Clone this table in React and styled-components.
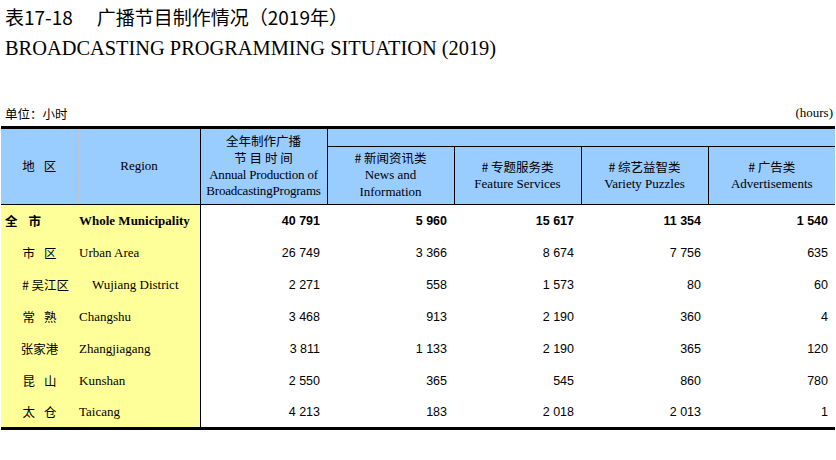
import React from 'react';
import styled, { createGlobalStyle } from 'styled-components';

const GlobalStyle = createGlobalStyle`
  body {
    margin: 0;
    background: #fff;
    color: #000;
  }
`;

const CN = '"Noto Sans CJK SC", "Liberation Sans", sans-serif';
const SERIF = '"Liberation Serif", "Noto Sans CJK SC", serif';
const NUM = '"Liberation Sans", Arial, sans-serif';

const Page = styled.div`
  width: 836px;
  height: 460px;
  padding-top: 5px;
  box-sizing: border-box;
`;

const TitleCn = styled.div`
  display: flex;
  gap: 24px;
  font-family: ${CN};
  font-size: 19px;
  line-height: 24px;
  padding-left: 5px;
  white-space: pre;
`;

const TitleEn = styled.div`
  font-family: ${SERIF};
  font-size: 20.4px;
  line-height: 26px;
  margin-top: 6px;
  padding-left: 5px;
`;

const UnitRow = styled.div`
  display: flex;
  justify-content: space-between;
  align-items: center;
  margin-top: 43px;
  padding: 0 3px 0 5px;
  height: 18px;
`;

const UnitCn = styled.span`
  font-family: ${CN};
  font-size: 12.5px;
`;

const UnitEn = styled.span`
  font-family: ${SERIF};
  font-size: 13px;
`;

const Table = styled.table`
  margin: 4px 0 0 1px;
  width: 834px;
  table-layout: fixed;
  border-collapse: collapse;
  border-top: 3px solid #000;
  border-bottom: 3px solid #000;
`;

const HeadCell = styled.th`
  background: #99ccff;
  font-weight: normal;
  padding: 0;
  text-align: center;
  vertical-align: middle;
  line-height: 16.7px;
  height: ${(p) => p.h || 'auto'};
  border-bottom: 1px solid #000;
  border-right: 1px solid ${(p) => (p.soft ? '#b8c4d0' : '#000')};
  &:last-child {
    border-right: none;
  }
`;

const Cn = styled.div`
  font-family: ${CN};
  font-size: 12.5px;
`;

const En = styled.div`
  font-family: ${SERIF};
  font-size: 13px;
  letter-spacing: ${(p) => p.tight || 0};
`;

const Spread = styled.span`
  display: inline-flex;
  gap: ${(p) => p.gap}px;
  font-family: ${CN};
  font-size: 12.5px;
  font-weight: ${(p) => (p.bold ? 'bold' : 'normal')};
`;

const Row = styled.tr`
  height: 32px;
`;

const NameCell = styled.td`
  background: #ffff99;
  padding: 0 0 0 ${(p) => p.pad || 0}px;
  text-align: ${(p) => p.align || 'center'};
  font-family: ${CN};
  font-size: 12.5px;
  white-space: nowrap;
`;

const RegionCell = styled.td`
  background: #ffff99;
  padding: 0 0 0 ${(p) => p.pad || 1}px;
  font-family: ${SERIF};
  font-size: 13px;
  font-weight: ${(p) => (p.bold ? 'bold' : 'normal')};
  border-right: 1px solid #000;
  white-space: nowrap;
`;

const NumCell = styled.td`
  padding: 0 7px 0 0;
  text-align: right;
  font-family: ${NUM};
  font-size: 12.5px;
  font-weight: ${(p) => (p.bold ? 'bold' : 'normal')};
`;

const rows = [
  { cn: ['全', '市'], gap: 11, left: true, en: 'Whole Municipality', bold: true, nums: ['40 791', '5 960', '15 617', '11 354', '1 540'] },
  { cn: ['市', '区'], gap: 9, en: 'Urban Area', nums: ['26 749', '3 366', '8 674', '7 756', '635'] },
  { cn: ['# 吴江区'], gap: 0, en: 'Wujiang District', enPad: 14, shift: 12, nums: ['2 271', '558', '1 573', '80', '60'] },
  { cn: ['常', '熟'], gap: 9, en: 'Changshu', nums: ['3 468', '913', '2 190', '360', '4'] },
  { cn: ['张家港'], gap: 0, en: 'Zhangjiagang', nums: ['3 811', '1 133', '2 190', '365', '120'] },
  { cn: ['昆', '山'], gap: 9, en: 'Kunshan', nums: ['2 550', '365', '545', '860', '780'] },
  { cn: ['太', '仓'], gap: 9, en: 'Taicang', nums: ['4 213', '183', '2 018', '2 013', '1'] },
];

const subHeads = [
  { cn: '# 新闻资讯类', en: ['News and', 'Information'] },
  { cn: '# 专题服务类', en: ['Feature Services'] },
  { cn: '# 综艺益智类', en: ['Variety Puzzles'] },
  { cn: '# 广告类', en: ['Advertisements'] },
];

const App = () => {
  return (
    <Page>
      <GlobalStyle />
      <TitleCn>
        <span>表17-18</span>
        <span>广播节目制作情况（2019年）</span>
      </TitleCn>
      <TitleEn>BROADCASTING PROGRAMMING SITUATION (2019)</TitleEn>
      <UnitRow>
        <UnitCn>单位：小时</UnitCn>
        <UnitEn>(hours)</UnitEn>
      </UnitRow>
      <Table>
        <colgroup>
          <col style={{ width: 77 }} />
          <col style={{ width: 122 }} />
          <col style={{ width: 127 }} />
          <col style={{ width: 127 }} />
          <col style={{ width: 127 }} />
          <col style={{ width: 127 }} />
          <col style={{ width: 127 }} />
        </colgroup>
        <thead>
          <tr>
            <HeadCell rowSpan={2} soft>
              <Spread gap={9}>
                <span>地</span>
                <span>区</span>
              </Spread>
            </HeadCell>
            <HeadCell rowSpan={2}>
              <En>Region</En>
            </HeadCell>
            <HeadCell rowSpan={2}>
              <Cn>全年制作广播</Cn>
              <Cn>节 目 时 间</Cn>
              <En tight="-0.2px">Annual Production of</En>
              <En tight="-0.2px">BroadcastingPrograms</En>
            </HeadCell>
            <HeadCell colSpan={4} h="17px" />
          </tr>
          <tr>
            {subHeads.map((h) => (
              <HeadCell key={h.cn} h="57px">
                <Cn>{h.cn}</Cn>
                {h.en.map((line) => (
                  <En key={line}>{line}</En>
                ))}
              </HeadCell>
            ))}
          </tr>
        </thead>
        <tbody>
          {rows.map((r) => (
            <Row key={r.en}>
              <NameCell align={r.left ? 'left' : 'center'} pad={r.left ? 4 : r.shift || 0}>
                <Spread gap={r.gap} bold={r.bold}>
                  {r.cn.map((c) => (
                    <span key={c}>{c}</span>
                  ))}
                </Spread>
              </NameCell>
              <RegionCell bold={r.bold} pad={r.enPad}>
                {r.en}
              </RegionCell>
              {r.nums.map((n, i) => (
                <NumCell key={i} bold={r.bold}>
                  {n}
                </NumCell>
              ))}
            </Row>
          ))}
        </tbody>
      </Table>
    </Page>
  );
};

export default App;
